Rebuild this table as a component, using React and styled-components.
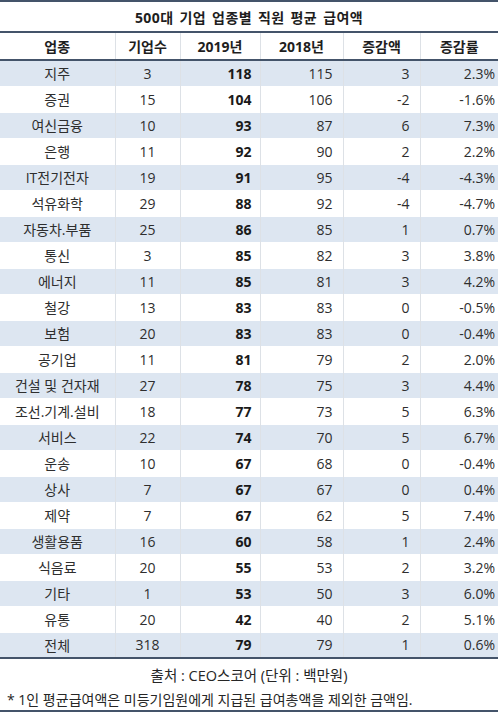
import styled, { createGlobalStyle } from "styled-components";

const GlobalStyle = createGlobalStyle`
  body {
    margin: 0;
    background: #ffffff;
    font-family: "Open Sans", "Noto Sans CJK KR", sans-serif;
    color: #262626;
  }
`;

const rows = [
  ["지주", 3, 118, 115, 3, "2.3%"],
  ["증권", 15, 104, 106, -2, "-1.6%"],
  ["여신금융", 10, 93, 87, 6, "7.3%"],
  ["은행", 11, 92, 90, 2, "2.2%"],
  ["IT전기전자", 19, 91, 95, -4, "-4.3%"],
  ["석유화학", 29, 88, 92, -4, "-4.7%"],
  ["자동차.부품", 25, 86, 85, 1, "0.7%"],
  ["통신", 3, 85, 82, 3, "3.8%"],
  ["에너지", 11, 85, 81, 3, "4.2%"],
  ["철강", 13, 83, 83, 0, "-0.5%"],
  ["보험", 20, 83, 83, 0, "-0.4%"],
  ["공기업", 11, 81, 79, 2, "2.0%"],
  ["건설 및 건자재", 27, 78, 75, 3, "4.4%"],
  ["조선.기계.설비", 18, 77, 73, 5, "6.3%"],
  ["서비스", 22, 74, 70, 5, "6.7%"],
  ["운송", 10, 67, 68, 0, "-0.4%"],
  ["상사", 7, 67, 67, 0, "0.4%"],
  ["제약", 7, 67, 62, 5, "7.4%"],
  ["생활용품", 16, 60, 58, 1, "2.4%"],
  ["식음료", 20, 55, 53, 2, "3.2%"],
  ["기타", 1, 53, 50, 3, "6.0%"],
  ["유통", 20, 42, 40, 2, "5.1%"],
  ["전체", 318, 79, 79, 1, "0.6%"],
];

const columns = [
  { label: "업종", width: 115 },
  { label: "기업수", width: 65 },
  { label: "2019년", width: 80 },
  { label: "2018년", width: 83 },
  { label: "증감액", width: 77 },
  { label: "증감률", width: 78 },
];

const Page = styled.div`
  width: 498px;
`;

const Title = styled.div`
  border-top: 2px solid #44546a;
  border-bottom: 2px solid #44546a;
  height: 29px;
  display: flex;
  align-items: center;
  justify-content: center;
  font-size: 14px;
  font-weight: 700;
  letter-spacing: 0.4px;
  word-spacing: 2px;
  color: #1e1e1e;
`;

const Table = styled.table`
  width: 498px;
  border-collapse: collapse;
  table-layout: fixed;
  font-size: 14px;
  border-bottom: 2px solid #44546a;
`;

const HeadCell = styled.th`
  height: 26px;
  padding: 0;
  font-weight: 700;
  text-align: center;
  color: #1e1e1e;
  border-bottom: 2px solid #44546a;
  border-left: 1px solid #dde1e6;
  &:first-child {
    border-left: none;
  }
`;

const Row = styled.tr`
  height: 26px;
  background: ${(p) => (p.$shaded ? "#dde6f1" : "#ffffff")};
  border-top: 1px solid #ffffff;
`;

const Cell = styled.td`
  padding: 0 ${(p) => p.$pad || 0}px 0 0;
  text-align: ${(p) => p.$align || "center"};
  font-weight: ${(p) => (p.$bold ? 700 : 400)};
  color: ${(p) => (p.$bold ? "#1a1a1a" : "#2e2e2e")};
  border-left: 1px solid #dde1e6;
  white-space: nowrap;
  &:first-child {
    border-left: none;
  }
`;

const Source = styled.div`
  height: 26px;
  display: flex;
  align-items: center;
  justify-content: center;
  font-size: 14.5px;
  margin-top: 2px;
`;

const Note = styled.div`
  height: 23px;
  display: flex;
  align-items: center;
  padding-left: 7px;
  font-size: 14px;
  border-bottom: 2px solid #44546a;
`;

export default function App() {
  return (
    <Page>
      <GlobalStyle />
      <Title>500대 기업 업종별 직원 평균 급여액</Title>
      <Table>
        <colgroup>
          {columns.map((c) => (
            <col key={c.label} style={{ width: c.width }} />
          ))}
        </colgroup>
        <thead>
          <tr>
            {columns.map((c) => (
              <HeadCell key={c.label}>{c.label}</HeadCell>
            ))}
          </tr>
        </thead>
        <tbody>
          {rows.map((r, i) => (
            <Row key={r[0]} $shaded={i % 2 === 0}>
              <Cell>{r[0]}</Cell>
              <Cell>{r[1]}</Cell>
              <Cell $align="right" $pad={8} $bold>
                {r[2]}
              </Cell>
              <Cell $align="right" $pad={10}>
                {r[3]}
              </Cell>
              <Cell $align="right" $pad={10}>
                {r[4]}
              </Cell>
              <Cell $align="right" $pad={3}>
                {r[5]}
              </Cell>
            </Row>
          ))}
        </tbody>
      </Table>
      <Source>출처 : CEO스코어 (단위 : 백만원)</Source>
      <Note>* 1인 평균급여액은 미등기임원에게 지급된 급여총액을 제외한 금액임.</Note>
    </Page>
  );
}
